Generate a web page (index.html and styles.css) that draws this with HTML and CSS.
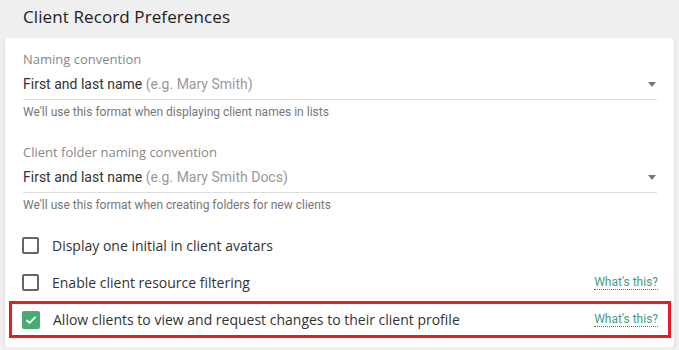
FILE: index.html
```html
<!DOCTYPE html>
<html>
<head>
    <title>Client Record Preferences</title>
    <link rel="stylesheet" href="styles.css">
</head>
<body>
    <div class="page-title">Client Record Preferences</div>
    <div class="card">
        <div class="field">
            <div class="field-label">Naming convention</div>
            <div class="select">
                <span class="select-value">First and last name <span class="hint">(e.g. Mary Smith)</span></span>
                <span class="arrow"></span>
            </div>
            <div class="helper">We'll use this format when displaying client names in lists</div>
        </div>
        <div class="field">
            <div class="field-label">Client folder naming convention</div>
            <div class="select">
                <span class="select-value">First and last name <span class="hint">(e.g. Mary Smith Docs)</span></span>
                <span class="arrow"></span>
            </div>
            <div class="helper">We'll use this format when creating folders for new clients</div>
        </div>
        <div class="options">
            <div class="option">
                <span class="checkbox"></span>
                <span class="option-text">Display one initial in client avatars</span>
            </div>
            <div class="option">
                <span class="checkbox"></span>
                <span class="option-text">Enable client resource filtering</span>
                <a class="whats-this">What's this?</a>
            </div>
            <div class="option highlighted">
                <span class="checkbox checked">
                    <svg width="12" height="10" viewBox="0 0 12 10"><path d="M1.5 5.2 L4.5 8 L10.5 1.8" fill="none" stroke="#fff" stroke-width="1.8"/></svg>
                </span>
                <span class="option-text">Allow clients to view and request changes to their client profile</span>
                <a class="whats-this">What's this?</a>
            </div>
        </div>
    </div>
</body>
</html>
```
FILE: styles.css
```css
body {
    margin: 0;
    background: #efefef;
    font-family: "Open Sans", Arial, sans-serif;
    color: #333;
}
.page-title {
    font-size: 17px;
    color: #222;
    padding: 5px 23px 0;
    height: 33px;
    letter-spacing: 0.1px;
}
.card {
    background: #fff;
    margin: 0 5px;
    border-radius: 3px;
    box-shadow: 0 1px 3px rgba(0, 0, 0, 0.15);
    padding: 11px 17px 8px 18px;
    height: 309px;
    box-sizing: border-box;
    width: 669px;
}
.field + .field {
    margin-top: 18px;
}
.field-label {
    font-size: 13px;
    color: #888;
    line-height: 20px;
}
.select {
    display: flex;
    align-items: center;
    justify-content: space-between;
    height: 30px;
    border-bottom: 1px solid #ddd;
    font-family: Roboto, Arial, sans-serif;
    font-size: 14px;
    color: #333;
}
.hint {
    color: #999;
}
.arrow {
    width: 0;
    height: 0;
    border-left: 4.5px solid transparent;
    border-right: 4.5px solid transparent;
    border-top: 5px solid #777;
    margin-right: 1px;
}
.helper {
    font-family: Roboto, Arial, sans-serif;
    font-size: 12px;
    color: #777;
    line-height: 24px;
}
.options {
    margin-top: 10px;
}
.option {
    position: relative;
    display: flex;
    align-items: center;
    height: 37px;
    font-size: 14px;
    color: #333;
}
.checkbox {
    width: 13px;
    height: 13px;
    border: 2px solid #666;
    border-radius: 2px;
    margin-left: -1px;
    margin-right: 13px;
    display: flex;
    align-items: center;
    justify-content: center;
}
.checkbox.checked {
    background: #4aab72;
    border-color: #4aab72;
    width: 14px;
    height: 14px;
}
.option-text {
    flex: 1;
}
.whats-this {
    font-family: Roboto, Arial, sans-serif;
    font-size: 12px;
    color: #3f9c86;
    border-bottom: 1px dotted #1f9a4a;
    line-height: 14px;
    margin-right: -1px;
}
.highlighted::after {
    content: "";
    position: absolute;
    left: -14px;
    right: -14px;
    top: 0;
    bottom: 0;
    border: 3px solid #e81c24;
}
```
